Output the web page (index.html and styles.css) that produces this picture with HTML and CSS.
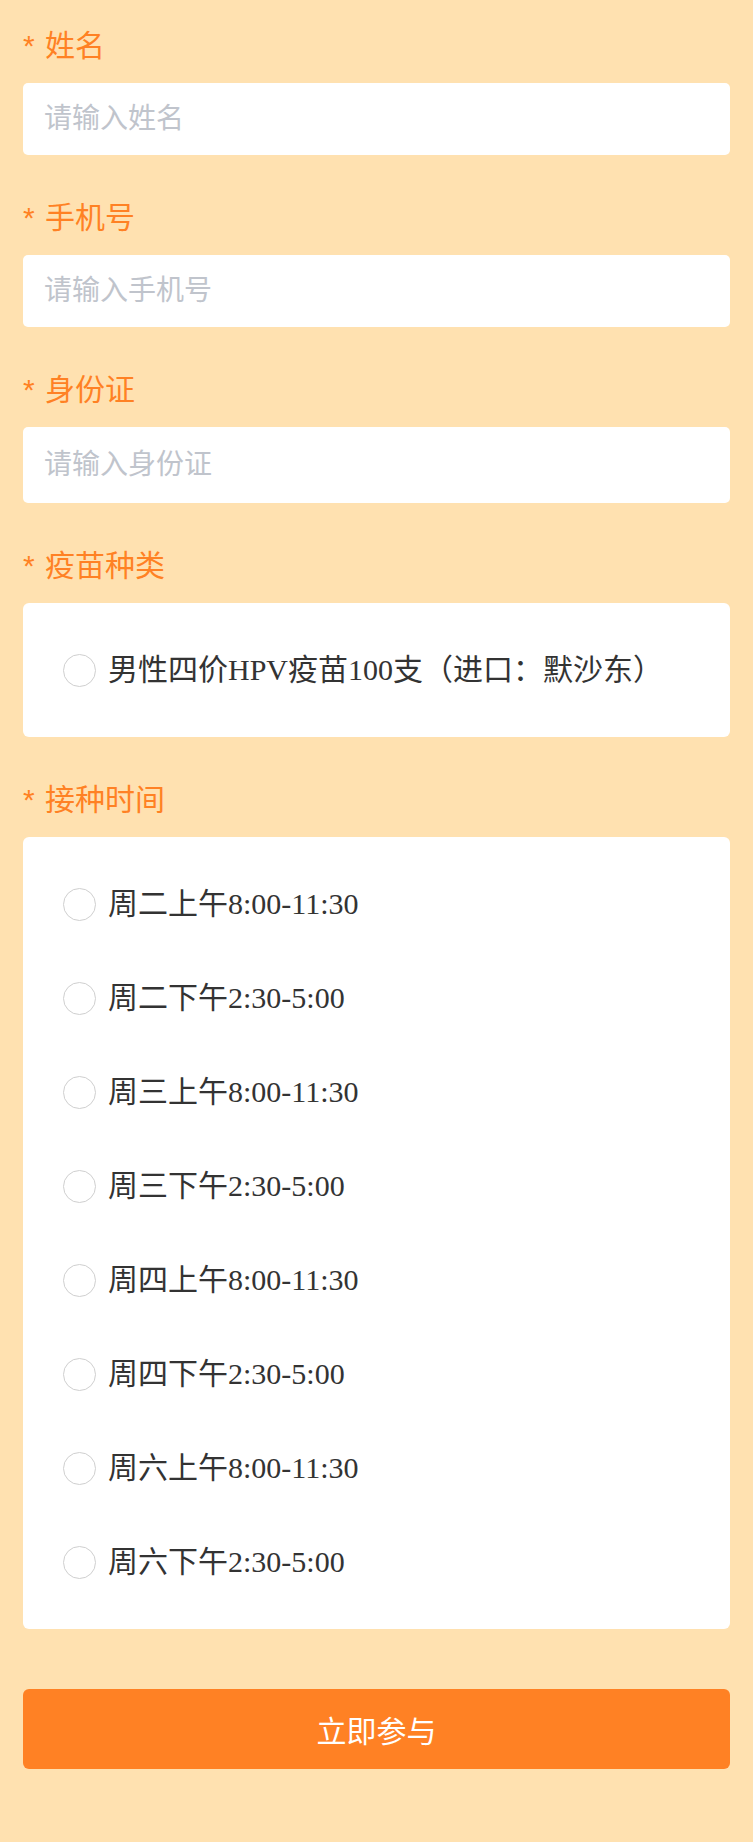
FILE: index.html
```html
<!DOCTYPE html>
<html lang="zh-CN">
<head>
<meta charset="utf-8">
<title>预约</title>
<link rel="stylesheet" href="styles.css">
</head>
<body>
<form class="form">
  <div class="field">
    <div class="label"><span class="star">*</span> 姓名</div>
    <input class="input" type="text" placeholder="请输入姓名">
  </div>
  <div class="field">
    <div class="label"><span class="star">*</span> 手机号</div>
    <input class="input" type="text" placeholder="请输入手机号">
  </div>
  <div class="field">
    <div class="label"><span class="star">*</span> 身份证</div>
    <input class="input input-tall" type="text" placeholder="请输入身份证">
  </div>
  <div class="field">
    <div class="label"><span class="star">*</span> 疫苗种类</div>
    <div class="card">
      <label class="option"><span class="radio"></span><span class="opt-text">男性四价HPV疫苗100支（进口：默沙东）</span></label>
    </div>
  </div>
  <div class="field">
    <div class="label"><span class="star">*</span> 接种时间</div>
    <div class="card">
      <label class="option"><span class="radio"></span><span class="opt-text">周二上午8:00-11:30</span></label>
      <label class="option"><span class="radio"></span><span class="opt-text">周二下午2:30-5:00</span></label>
      <label class="option"><span class="radio"></span><span class="opt-text">周三上午8:00-11:30</span></label>
      <label class="option"><span class="radio"></span><span class="opt-text">周三下午2:30-5:00</span></label>
      <label class="option"><span class="radio"></span><span class="opt-text">周四上午8:00-11:30</span></label>
      <label class="option"><span class="radio"></span><span class="opt-text">周四下午2:30-5:00</span></label>
      <label class="option"><span class="radio"></span><span class="opt-text">周六上午8:00-11:30</span></label>
      <label class="option"><span class="radio"></span><span class="opt-text">周六下午2:30-5:00</span></label>
    </div>
  </div>
  <button class="submit" type="button">立即参与</button>
</form>
</body>
</html>
```

FILE: styles.css
```css
html, body {
  margin: 0;
  padding: 0;
  background: #ffe1b0;
}

body {
  font-family: "Liberation Sans", "Noto Sans CJK SC", sans-serif;
  min-height: 1842px;
}

.form {
  display: flex;
  flex-direction: column;
  padding: 24px 23px 73px 23px;
}

.field {
  display: flex;
  flex-direction: column;
  margin-bottom: 41px;
}

.label {
  height: 40px;
  line-height: 40px;
  padding-top: 2px;
  font-size: 30px;
  color: #ff8124;
  margin-bottom: 17px;
  white-space: nowrap;
}

.star {
  color: #ff8124;
  margin-right: 2px;
}

.input {
  box-sizing: border-box;
  display: block;
  width: 100%;
  height: 72px;
  border: none;
  outline: none;
  border-radius: 5px;
  background: #fff;
  padding: 0 21px;
  margin: 0;
  font-family: "Liberation Sans", "Noto Sans CJK SC", sans-serif;
  font-size: 28px;
  color: #333;
}

.input-tall {
  height: 76px;
}

.input::placeholder {
  color: #c0c4cc;
}

.card {
  background: #fff;
  border-radius: 6px;
  padding: 20px 0;
  display: flex;
  flex-direction: column;
}

.option {
  display: flex;
  align-items: center;
  height: 94px;
  padding-left: 40px;
}

.radio {
  box-sizing: border-box;
  width: 33px;
  height: 33px;
  border: 1px solid #cfcfcf;
  border-radius: 50%;
  background: #fff;
  flex: none;
  margin-right: 12px;
}

.opt-text {
  font-family: "Liberation Serif", "Noto Sans CJK SC", serif;
  font-size: 30px;
  line-height: 34px;
  color: #333;
  white-space: nowrap;
}

.submit {
  display: block;
  width: 100%;
  height: 80px;
  margin-top: 19px;
  border: none;
  border-radius: 6px;
  background: #ff8124;
  color: #fff;
  font-family: "Liberation Sans", "Noto Sans CJK SC", sans-serif;
  font-size: 30px;
  padding: 0;
}
```
